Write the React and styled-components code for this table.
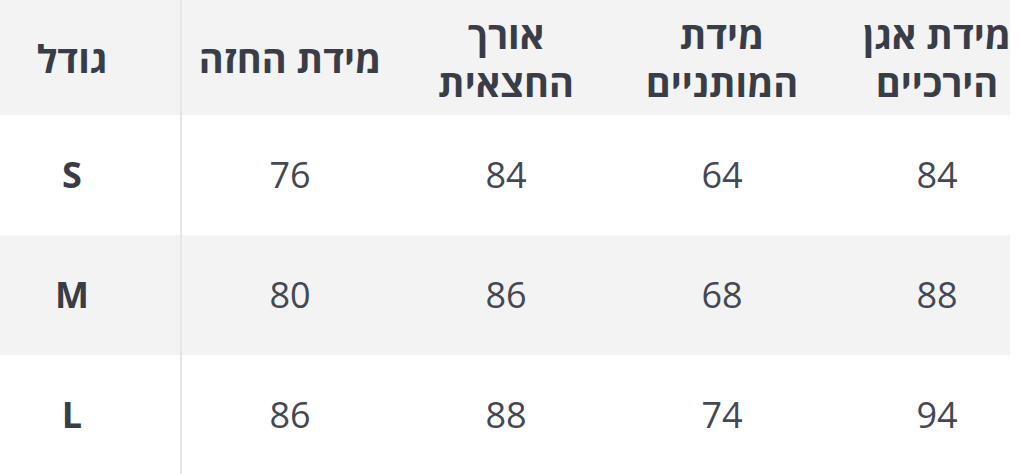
import styled, { createGlobalStyle } from 'styled-components';

const GlobalStyle = createGlobalStyle`
  html, body {
    margin: 0;
    padding: 0;
    background: #fff;
  }
  body {
    font-family: "Open Sans", "Noto Sans", "DejaVu Sans", sans-serif;
  }
`;

const Table = styled.div`
  width: 1010px;
  direction: rtl;
`;

const Row = styled.div`
  display: grid;
  grid-template-columns: 180px 216px 216px 216px 182px;
  height: ${(p) => (p.$head ? '115px' : '120px')};
  background: ${(p) => (p.$shade ? '#f3f3f3' : '#fff')};
`;

const Cell = styled.div`
  display: flex;
  align-items: center;
  justify-content: center;
  text-align: center;
  font-size: ${(p) => (p.$head ? '38px' : '36px')};
  line-height: 48px;
  white-space: nowrap;
  color: ${(p) => (p.$head || p.$size ? '#383d48' : '#434854')};
  font-weight: ${(p) => (p.$head || p.$size ? 700 : 400)};
  padding-left: ${(p) => (p.$outer ? '34px' : '0')};
  padding-right: ${(p) => (p.$sizeCol ? '36px' : '0')};
  border-right: ${(p) => (p.$sizeCol ? '2px solid #e6e6e6' : 'none')};
`;

const HeadLine = styled.div`
  display: block;
`;

const headers = [
  ['מידת אגן', 'הירכיים'],
  ['מידת', 'המותניים'],
  ['אורך', 'החצאית'],
  ['מידת החזה'],
  ['גודל'],
];

const rows = [
  ['84', '64', '84', '76', 'S'],
  ['88', '68', '86', '80', 'M'],
  ['94', '74', '88', '86', 'L'],
];

export default function App() {
  return (
    <>
      <GlobalStyle />
      <Table>
        <Row $head $shade>
          {headers.map((lines, i) => (
            <Cell key={i} $head $outer={i === 0} $sizeCol={i === 4}>
              <span>
                {lines.map((l, j) => (
                  <HeadLine key={j}>{l}</HeadLine>
                ))}
              </span>
            </Cell>
          ))}
        </Row>
        {rows.map((r, ri) => (
          <Row key={ri} $shade={ri === 1}>
            {r.map((v, i) => (
              <Cell key={i} $size={i === 4} $outer={i === 0} $sizeCol={i === 4}>
                {v}
              </Cell>
            ))}
          </Row>
        ))}
      </Table>
    </>
  );
}
